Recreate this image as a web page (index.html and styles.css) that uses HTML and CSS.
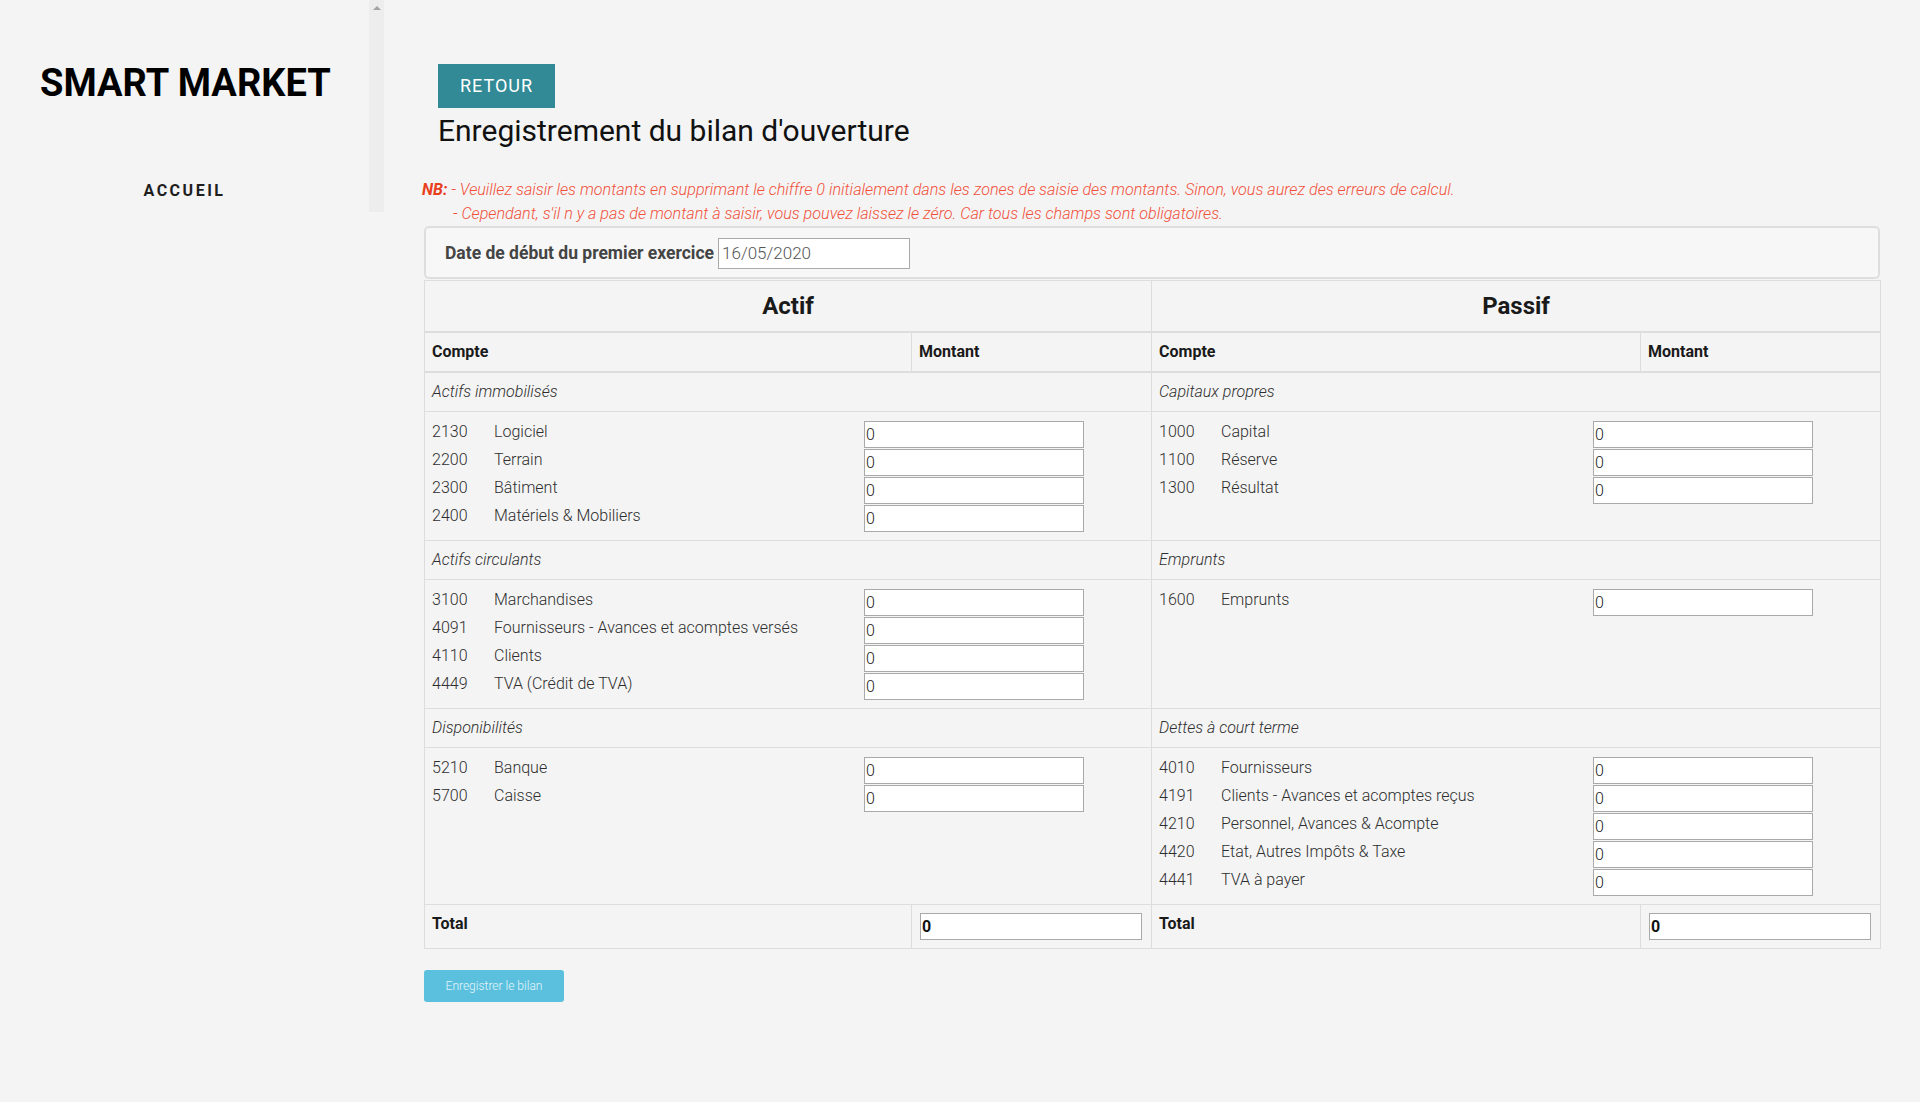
FILE: index.html
```html
<!DOCTYPE html>
<html lang="fr">
<head>
<meta charset="utf-8">
<title>Smart Market - Bilan d'ouverture</title>
<link rel="stylesheet" href="styles.css">
</head>
<body>
<div class="layout">
  <aside class="sidebar">
    <div class="sidebar-inner">
      <h1 class="brand">SMART MARKET</h1>
      <nav class="nav"><a class="nav-link" href="#">ACCUEIL</a></nav>
    </div>
    <div class="scrollbar"><span class="scroll-arrow"></span></div>
  </aside>
  <main class="main">
    <a class="btn-retour" href="#">RETOUR</a>
    <h2 class="title">Enregistrement du bilan d'ouverture</h2>
    <p class="nb"><b class="nb-tag">NB:</b> - Veuillez saisir les montants en supprimant le chiffre 0 initialement dans les zones de saisie des montants. Sinon, vous aurez des erreurs de calcul.<br><span class="nb-indent">- Cependant, s'il n y a pas de montant à saisir, vous pouvez laissez le zéro. Car tous les champs sont obligatoires.</span></p>
    <div class="date-box">
      <label class="date-label">Date de début du premier exercice</label>
      <input class="date-input" type="text" value="16/05/2020">
    </div>
    <table class="bilan">
      <colgroup>
        <col class="c-compte-l"><col class="c-montant"><col class="c-compte-r"><col class="c-montant">
      </colgroup>
      <thead>
        <tr class="row-side">
          <th colspan="2">Actif</th>
          <th colspan="2">Passif</th>
        </tr>
        <tr class="row-head">
          <th>Compte</th><th>Montant</th>
          <th>Compte</th><th>Montant</th>
        </tr>
      </thead>
      <tbody>
        <tr class="row-group">
          <td colspan="2">Actifs immobilisés</td>
          <td colspan="2">Capitaux propres</td>
        </tr>
        <tr class="row-items">
          <td colspan="2">
            <div class="line"><span class="code">2130</span><span class="lbl">Logiciel</span><input class="amount" type="text" value="0"></div>
            <div class="line"><span class="code">2200</span><span class="lbl">Terrain</span><input class="amount" type="text" value="0"></div>
            <div class="line"><span class="code">2300</span><span class="lbl">Bâtiment</span><input class="amount" type="text" value="0"></div>
            <div class="line"><span class="code">2400</span><span class="lbl">Matériels &amp; Mobiliers</span><input class="amount" type="text" value="0"></div>
          </td>
          <td colspan="2">
            <div class="line"><span class="code">1000</span><span class="lbl">Capital</span><input class="amount" type="text" value="0"></div>
            <div class="line"><span class="code">1100</span><span class="lbl">Réserve</span><input class="amount" type="text" value="0"></div>
            <div class="line"><span class="code">1300</span><span class="lbl">Résultat</span><input class="amount" type="text" value="0"></div>
          </td>
        </tr>
        <tr class="row-group">
          <td colspan="2">Actifs circulants</td>
          <td colspan="2">Emprunts</td>
        </tr>
        <tr class="row-items">
          <td colspan="2">
            <div class="line"><span class="code">3100</span><span class="lbl">Marchandises</span><input class="amount" type="text" value="0"></div>
            <div class="line"><span class="code">4091</span><span class="lbl">Fournisseurs - Avances et acomptes versés</span><input class="amount" type="text" value="0"></div>
            <div class="line"><span class="code">4110</span><span class="lbl">Clients</span><input class="amount" type="text" value="0"></div>
            <div class="line"><span class="code">4449</span><span class="lbl">TVA (Crédit de TVA)</span><input class="amount" type="text" value="0"></div>
          </td>
          <td colspan="2">
            <div class="line"><span class="code">1600</span><span class="lbl">Emprunts</span><input class="amount" type="text" value="0"></div>
          </td>
        </tr>
        <tr class="row-group">
          <td colspan="2">Disponibilités</td>
          <td colspan="2">Dettes à court terme</td>
        </tr>
        <tr class="row-items">
          <td colspan="2">
            <div class="line"><span class="code">5210</span><span class="lbl">Banque</span><input class="amount" type="text" value="0"></div>
            <div class="line"><span class="code">5700</span><span class="lbl">Caisse</span><input class="amount" type="text" value="0"></div>
          </td>
          <td colspan="2">
            <div class="line"><span class="code">4010</span><span class="lbl">Fournisseurs</span><input class="amount" type="text" value="0"></div>
            <div class="line"><span class="code">4191</span><span class="lbl">Clients - Avances et acomptes reçus</span><input class="amount" type="text" value="0"></div>
            <div class="line"><span class="code">4210</span><span class="lbl">Personnel, Avances &amp; Acompte</span><input class="amount" type="text" value="0"></div>
            <div class="line"><span class="code">4420</span><span class="lbl">Etat, Autres Impôts &amp; Taxe</span><input class="amount" type="text" value="0"></div>
            <div class="line"><span class="code">4441</span><span class="lbl">TVA à payer</span><input class="amount" type="text" value="0"></div>
          </td>
        </tr>
        <tr class="row-total">
          <td class="total-label">Total</td>
          <td><input class="total-input" type="text" value="0"></td>
          <td class="total-label">Total</td>
          <td><input class="total-input" type="text" value="0"></td>
        </tr>
      </tbody>
    </table>
    <button class="btn-save" type="button">Enregistrer le bilan</button>
  </main>
</div>
</body>
</html>
```

FILE: styles.css
```css
* { box-sizing: border-box; }

html, body {
  margin: 0;
  padding: 0;
  background: #f4f4f4;
  font-family: Roboto, "Liberation Sans", Arial, sans-serif;
  color: #333;
}

.layout {
  display: flex;
  align-items: flex-start;
}

/* Sidebar */
.sidebar {
  width: 384px;
  height: 212px;
  display: flex;
  flex-shrink: 0;
}

.sidebar-inner {
  width: 369px;
  display: flex;
  flex-direction: column;
}

.brand {
  margin: 60px 0 0 40px;
  font-size: 38px;
  line-height: 46px;
  font-weight: 700;
  color: #000;
  white-space: nowrap;
}

.nav {
  margin-top: 75px;
  text-align: center;
}

.nav-link {
  font-size: 16px;
  line-height: 20px;
  font-weight: 700;
  letter-spacing: 2.5px;
  color: #1e1e1e;
  text-decoration: none;
}

.scrollbar {
  width: 15px;
  height: 212px;
  background: #ededed;
  display: flex;
  justify-content: center;
  padding-top: 6px;
}

.scroll-arrow {
  width: 0;
  height: 0;
  border-left: 4px solid transparent;
  border-right: 4px solid transparent;
  border-bottom: 4px solid #a3a3a3;
}

/* Main */
.main {
  flex: 1;
  padding: 64px 40px 40px 40px;
  display: flex;
  flex-direction: column;
  align-items: flex-start;
}

.btn-retour {
  margin-left: 14px;
  display: block;
  width: 117px;
  height: 44px;
  line-height: 44px;
  text-align: center;
  background: #318a96;
  color: #fff;
  font-size: 18px;
  letter-spacing: 1px;
  text-decoration: none;
}

.title {
  margin: 6px 0 0 14px;
  font-size: 30px;
  line-height: 34px;
  font-weight: 400;
  color: #111;
}

.nb {
  margin: 30px 0 0 -2px;
  font-size: 16.15px;
  line-height: 24px;
  font-style: italic;
  font-weight: 300;
  color: #f2503a;
}

.nb-tag {
  font-weight: 700;
  color: #e8401c;
}

.nb-indent {
  padding-left: 31px;
}

.date-box {
  width: 1456px;
  height: 53px;
  border: 2px solid #dedede;
  border-radius: 5px;
  background: #f7f7f7;
  display: flex;
  align-items: center;
  padding: 1px 0 0 19px;
}

.date-label {
  font-size: 17.5px;
  font-weight: 700;
  color: #444;
  margin-right: 4px;
}

.date-input {
  width: 192px;
  height: 31px;
  border: 1px solid #a9a9a9;
  background: #fff;
  font-family: Roboto, "Liberation Sans", Arial, sans-serif;
  font-size: 17px;
  font-weight: 300;
  color: #555;
  padding: 0 3px;
}

/* Table */
.bilan {
  width: 1456px;
  border-collapse: collapse;
  table-layout: fixed;
  border: 1px solid #dddddd;
  margin-top: 1px;
}

.c-compte-l { width: 487px; }
.c-compte-r { width: 489px; }
.c-montant { width: 240px; }

.bilan th,
.bilan td {
  border: 1px solid #dddddd;
  text-align: left;
  vertical-align: top;
  padding: 8px;
  font-size: 16px;
  line-height: 22px;
}

.row-side th {
  text-align: center;
  font-size: 24px;
  line-height: 34px;
  font-weight: 700;
  color: #1a1a1a;
  border-bottom: 2px solid #dddddd;
}

.row-head th {
  font-weight: 700;
  color: #1a1a1a;
  border-bottom: 2px solid #dddddd;
  padding-left: 7px;
}

.row-group td {
  font-style: italic;
  font-weight: 300;
  color: #2e2e2e;
  padding-left: 7px;
}

.row-items td {
  padding: 9px 67px 8px 7px;
}

.line {
  display: flex;
  align-items: flex-start;
  height: 27px;
  margin-bottom: 1px;
}

.line:last-child { margin-bottom: 0; }

.code {
  width: 62px;
  flex-shrink: 0;
  font-weight: 300;
  color: #2e2e2e;
  line-height: 22px;
}

.lbl {
  flex: 1;
  font-weight: 300;
  color: #2e2e2e;
  line-height: 22px;
  white-space: nowrap;
}

.amount,
.total-input {
  height: 27px;
  border: 1px solid #a9a9a9;
  background: #fff;
  font-family: Roboto, "Liberation Sans", Arial, sans-serif;
  font-size: 16px;
  font-weight: 300;
  color: #222;
  padding: 0 1px;
}

.amount { width: 220px; flex-shrink: 0; }

.total-label {
  font-weight: 700;
  color: #1a1a1a;
  padding-left: 7px !important;
}

.total-input {
  width: 222px;
  display: block;
  font-weight: 700;
  color: #111;
}

.btn-save {
  margin-top: 21px;
  width: 140px;
  height: 32px;
  border: 0;
  border-radius: 3px;
  background: #5bc0de;
  color: #e4f5fb;
  font-family: Roboto, "Liberation Sans", Arial, sans-serif;
  font-size: 12px;
  font-weight: 300;
  padding: 0;
}
```
